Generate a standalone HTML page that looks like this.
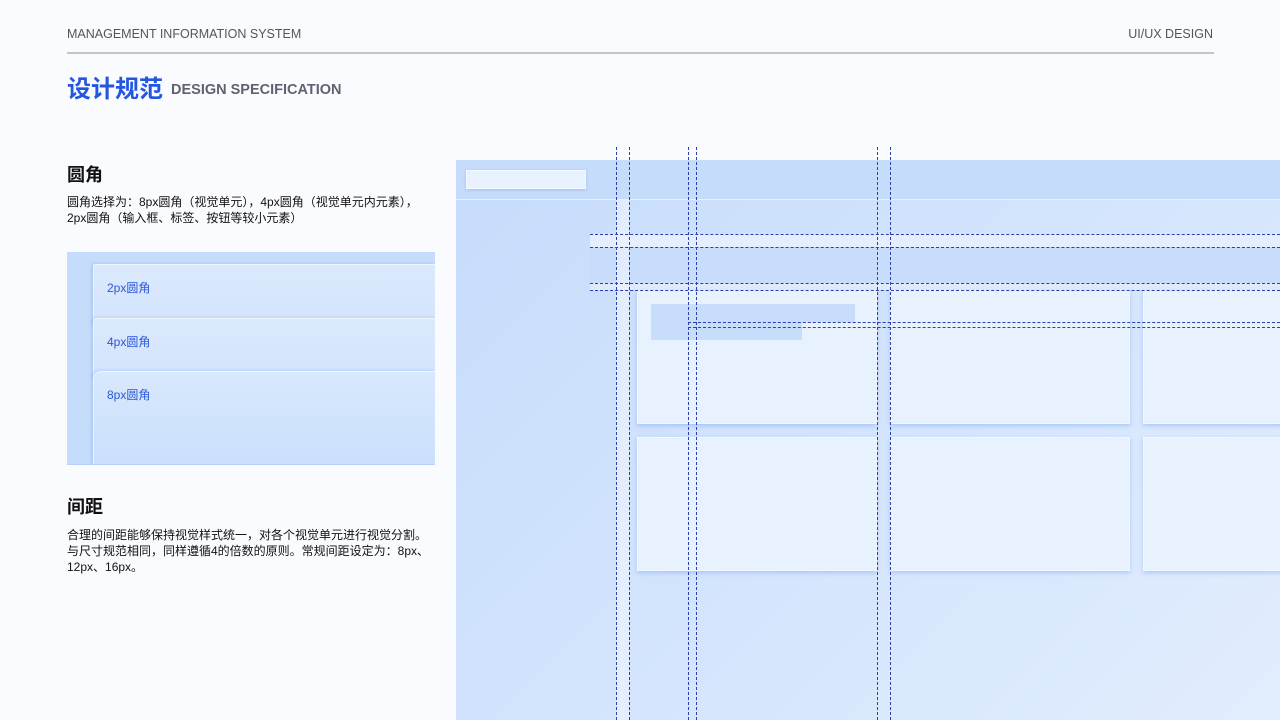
<!DOCTYPE html>
<html><head><meta charset="utf-8"><style>
*{margin:0;padding:0;box-sizing:border-box}
body{width:1280px;height:720px;background:#fafbfe;position:relative;overflow:hidden;font-family:"Liberation Sans","Noto Sans CJK SC",sans-serif;color:#111}
.a{position:absolute}
.top{font-size:12.5px;color:#555;top:27px}
.vd{position:absolute;top:147px;height:573px;border-left:1px dashed #2a3fb0;width:0}
.hd{position:absolute;height:0;border-top:1px dashed #2a3fb0;right:0}
.card{position:absolute;background:#e8f2ff;box-shadow:0 2px 4px rgba(120,165,240,.45);border:1px solid #f2f7ff}
.lc{position:absolute;left:26px;right:0;border:1px solid #eef5ff;border-right:none;background:linear-gradient(#dbe9fd,#d3e4fc);box-shadow:-1px 0 3px rgba(120,165,240,.5);font-size:12px;color:#2a56d8;padding:14px 0 0 13px}
</style></head><body>
<div class="a top" style="left:67px">MANAGEMENT INFORMATION SYSTEM</div>
<div class="a top" style="right:67px">UI/UX DESIGN</div>
<div class="a" style="left:67px;top:52px;width:1147px;height:2px;background:#c4c4c8"></div>
<div class="a" style="left:67px;top:71px;font-size:24px;font-weight:bold;color:#2457e0;font-family:'Noto Sans CJK SC',sans-serif;line-height:32px">设计规范</div>
<div class="a" style="left:171px;top:82px;font-size:14.5px;font-weight:bold;color:#5f6370">DESIGN SPECIFICATION</div>

<div class="a" style="left:67px;top:161px;font-size:18px;font-weight:bold;font-family:'Noto Sans CJK SC',sans-serif">圆角</div>
<div class="a" style="left:67px;top:194px;font-size:12px;line-height:16px;width:370px">圆角选择为：8px圆角（视觉单元），4px圆角（视觉单元内元素），<br>2px圆角（输入框、标签、按钮等较小元素）</div>

<div class="a" style="left:67px;top:252px;width:368px;height:213px;background:#c6dcfb;overflow:hidden;border-bottom:1px solid #b4d0fa">
<div class="lc" style="top:12px;height:60px;border-radius:2px 0 0 0">2px圆角</div>
<div class="lc" style="top:66px;height:60px;border-radius:4px 0 0 0">4px圆角</div>
<div class="lc" style="top:119px;height:100px;border-radius:8px 0 0 0;background:linear-gradient(#d8e8fd,#c9dffc)">8px圆角</div>
</div>

<div class="a" style="left:67px;top:493px;font-size:18px;font-weight:bold;font-family:'Noto Sans CJK SC',sans-serif">间距</div>
<div class="a" style="left:67px;top:527px;font-size:12px;line-height:16px;width:370px">合理的间距能够保持视觉样式统一，对各个视觉单元进行视觉分割。<br>与尺寸规范相同，同样遵循4的倍数的原则。常规间距设定为：8px、<br>12px、16px。</div>

<div class="a" style="left:456px;top:160px;width:824px;height:560px;background:linear-gradient(135deg,#c6dcfb,#d6e6fd 60%,#e2edfd)"></div>
<div class="a" style="left:456px;top:160px;width:824px;height:40px;background:#c6dcfb;border-bottom:1px solid #e6f0ff"></div>
<div class="a" style="left:466px;top:170px;width:120px;height:19px;background:#e8f2ff;border:1px solid #f5f9ff;box-shadow:0 1px 3px rgba(120,165,240,.5)"></div>
<div class="a" style="left:590px;top:234px;width:690px;height:13px;background:#e4eefd"></div>
<div class="a" style="left:590px;top:247px;width:690px;height:36px;background:#c8ddfb"></div>
<div class="a" style="left:590px;top:283px;width:690px;height:7px;background:#dfeafd"></div>
<div class="a" style="left:616px;top:200px;width:13px;height:520px;background:rgba(235,242,255,.7)"></div>

<div class="card" style="left:637px;top:290px;width:240px;height:134px"></div>
<div class="card" style="left:890px;top:290px;width:240px;height:134px"></div>
<div class="card" style="left:1143px;top:290px;width:140px;height:134px"></div>
<div class="card" style="left:637px;top:437px;width:240px;height:134px"></div>
<div class="card" style="left:890px;top:437px;width:240px;height:134px"></div>
<div class="card" style="left:1143px;top:437px;width:140px;height:134px"></div>
<div class="a" style="left:651px;top:304px;width:204px;height:18px;background:#c8ddfb"></div>
<div class="a" style="left:651px;top:322px;width:151px;height:18px;background:#c8ddfb"></div>

<div class="vd" style="left:616px"></div><div class="vd" style="left:629px"></div>
<div class="vd" style="left:688px"></div><div class="vd" style="left:696px"></div>
<div class="vd" style="left:877px"></div><div class="vd" style="left:890px"></div>
<div class="hd" style="left:590px;top:234px"></div><div class="hd" style="left:590px;top:247px"></div>
<div class="hd" style="left:590px;top:283px"></div><div class="hd" style="left:590px;top:290px"></div>
<div class="hd" style="left:688px;top:322px"></div><div class="hd" style="left:688px;top:327px"></div>
</body></html>
